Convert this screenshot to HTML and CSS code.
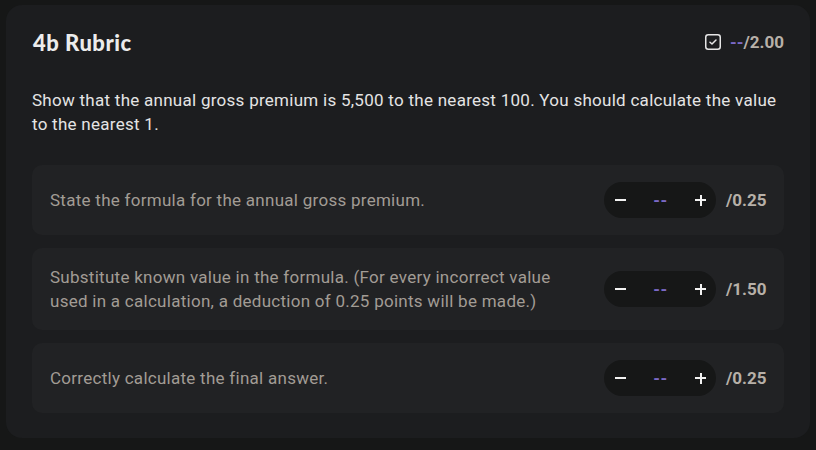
FILE: index.html
```html
<!DOCTYPE html>
<html>
<head>
<meta charset="utf-8">
<link rel="stylesheet" href="styles.css">
</head>
<body>
<div class="card">
  <div class="header">
    <h1 class="title">4b Rubric</h1>
    <div class="total">
      <svg class="check" width="16" height="16" viewBox="0 0 16 16"><rect x="0.75" y="0.75" width="14.5" height="14.5" rx="2.5" fill="none" stroke="#e6e6e6" stroke-width="1.5"/><path d="M5 8.2 L7 10 L11 6" fill="none" stroke="#e6e6e6" stroke-width="1.5" stroke-linecap="round" stroke-linejoin="round"/></svg>
      <span class="dash">--</span><span class="max">/2.00</span>
    </div>
  </div>
  <p class="desc">Show that the annual gross premium is 5,500 to the nearest 100. You should calculate the value to the nearest 1.</p>
  <div class="rows">
    <div class="row">
      <div class="text">State the formula for the annual gross premium.</div>
      <div class="score">
        <div class="stepper"><span class="btn minus"></span><span class="val">--</span><span class="btn plus"></span></div>
        <span class="pts">/0.25</span>
      </div>
    </div>
    <div class="row">
      <div class="text">Substitute known value in the formula. (For every incorrect value used in a calculation, a deduction of 0.25 points will be made.)</div>
      <div class="score">
        <div class="stepper"><span class="btn minus"></span><span class="val">--</span><span class="btn plus"></span></div>
        <span class="pts">/1.50</span>
      </div>
    </div>
    <div class="row">
      <div class="text">Correctly calculate the final answer.</div>
      <div class="score">
        <div class="stepper"><span class="btn minus"></span><span class="val">--</span><span class="btn plus"></span></div>
        <span class="pts">/0.25</span>
      </div>
    </div>
  </div>
</div>
</body>
</html>
```
FILE: styles.css
```css
* { box-sizing: border-box; }
html, body { margin: 0; padding: 0; }
body {
  background: #161717;
  font-family: Roboto, "Liberation Sans", sans-serif;
  width: 816px;
  height: 450px;
  overflow: hidden;
  padding: 5px 6px 0 6px;
}
.card {
  background: #1c1d1f;
  border-radius: 16px;
  height: 433px;
  padding: 20px 26px 25px 26px;
}
.header {
  display: flex;
  align-items: center;
  justify-content: space-between;
  height: 34px;
}
.title {
  margin: 0 0 0 1px;
  font-family: Lato, "Noto Sans", sans-serif;
  font-weight: 900;
  font-size: 22px;
  color: #ececec;
  letter-spacing: 0.5px;
}
.total {
  display: flex;
  align-items: center;
  font-size: 17px;
  font-weight: 700;
}
.check { margin-right: 9px; }
.dash { color: #7b69c6; }
.max { color: #b7b0a8; }
.desc {
  margin: 29px 0 29px 0;
  font-size: 17px;
  letter-spacing: 0.27px;
  line-height: 24px;
  color: #e4e4e4;
}
.rows {
  display: flex;
  flex-direction: column;
  gap: 13px;
}
.row {
  background: #212224;
  border-radius: 10px;
  display: flex;
  align-items: center;
  padding: 17px 18px;
  min-height: 70px;
}
.text {
  flex: 1;
  margin-right: 40px;
  font-size: 17px;
  letter-spacing: 0.27px;
  line-height: 24px;
  color: #a29c95;
}
.score {
  display: flex;
  align-items: center;
  gap: 10px;
}
.stepper {
  width: 112px;
  height: 36px;
  border-radius: 18px;
  background: #161717;
  display: flex;
  align-items: center;
  justify-content: space-between;
  padding: 0 10px 0 11px;
}
.btn {
  position: relative;
  width: 11px;
  height: 11px;
}
.minus::before, .plus::before, .plus::after {
  content: "";
  position: absolute;
  background: #f2f2f2;
}
.minus::before, .plus::before {
  left: 0;
  top: 4.5px;
  width: 11px;
  height: 2px;
}
.plus::after {
  left: 4.5px;
  top: 0;
  width: 2px;
  height: 11px;
}
.val {
  color: #7b69c6;
  font-weight: 700;
  font-size: 17px;
  letter-spacing: 0.5px;
}
.pts {
  color: #b7b0a8;
  font-weight: 700;
  font-size: 17px;
  width: 40px;
}
```
